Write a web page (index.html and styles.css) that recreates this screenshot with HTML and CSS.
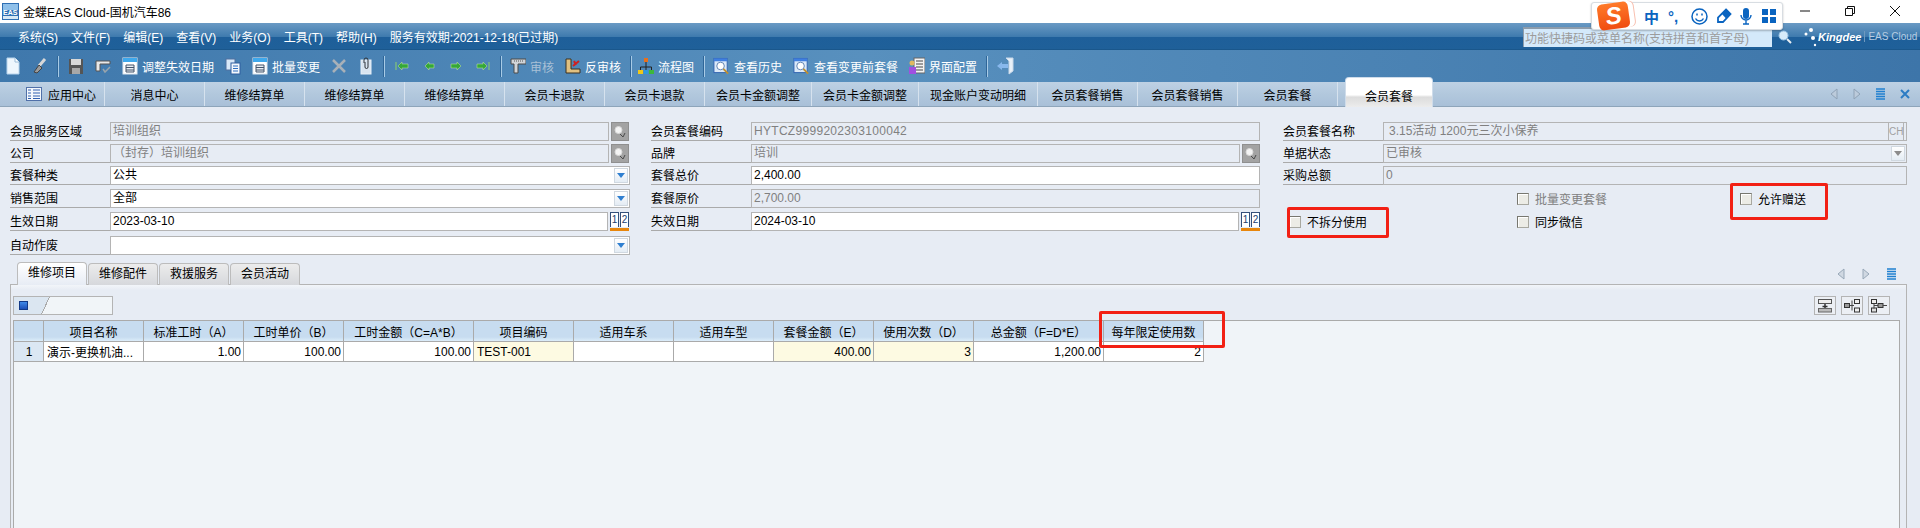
FILE: index.html
```html
<!doctype html>
<html>
    <head>
        <title>金蝶EAS Cloud-国机汽车86</title>
        <link rel="stylesheet" href="styles.css">
    </head>
    <body>
        <svg class="defs" width="0" height="0">
            <symbol id="i-sheet" viewBox="0 0 16 18">
                <rect x="1" y="1" width="14" height="16" fill="#fff" stroke="#dfe8f0"/>
                <rect x="1" y="1" width="14" height="4" fill="#3fa8ec"/>
                <path d="M4 8h8v7H4zM4 10.500h8M4 13h8" fill="#e8eef4" stroke="#44546a"/>
            </symbol>
            <symbol id="i-lens" viewBox="0 0 18 18">
                <rect x="1" y="1" width="14" height="15" fill="#dbe9f8" stroke="#2f62b0"/>
                <rect x="1" y="1" width="14" height="3" fill="#3f7fe0"/>
                <circle cx="8" cy="9" r="4" fill="#fff" stroke="#5b7fb0"/>
                <path d="M11 12l5 5" stroke="#c09030" stroke-width="2"/>
            </symbol>
            <symbol id="i-find" viewBox="0 0 18 19">
                <rect width="18" height="19" fill="#8f8f8f"/>
                <rect x="1" y="1" width="16" height="17" fill="#a3a3a3"/>
                <circle cx="7.500" cy="8" r="3.500" fill="#f4f4f4" stroke="#d8d8d8"/>
                <path d="M9 12l3 3 2-4" fill="none" stroke="#4a4a4a"/>
            </symbol>
        </svg>

        <div class="page">
            <div class="titlebar">
                <svg class="app-icon" width="17" height="17" viewBox="0 0 17 17">
                    <rect width="17" height="17" fill="#2f6fb4"/>
                    <rect x="1" y="1" width="15" height="6" fill="#8fc0ea"/>
                    <rect x="1" y="13" width="15" height="3" fill="#d8e8f4"/>
                    <text x="1" y="12" font-size="7" font-weight="700" fill="#fff">EAS</text>
                </svg>
                <span class="app-name">金蝶EAS Cloud-国机汽车86</span>
                <div class="winctl">
                    <svg width="12" height="12" viewBox="0 0 12 12"><path d="M1 6h10" stroke="#111"/></svg>
                    <svg width="12" height="12" viewBox="0 0 12 12"><path d="M1.500 3.500h7v7h-7zM3.500 3.500v-2h7v7h-2" fill="none" stroke="#111"/></svg>
                    <svg width="12" height="12" viewBox="0 0 12 12"><path d="M1 1l10 10M11 1L1 11" stroke="#111"/></svg>
                </div>
            </div>

            <div class="menubar">
                <span>系统(S)</span>
                <span>文件(F)</span>
                <span>编辑(E)</span>
                <span>查看(V)</span>
                <span>业务(O)</span>
                <span>工具(T)</span>
                <span>帮助(H)</span>
                <span>服务有效期:2021-12-18(已过期)</span>
                <div class="quick">功能快捷码或菜单名称(支持拼音和首字母)</div>
                <svg class="quick-go" width="14" height="14" viewBox="0 0 14 14">
                    <circle cx="5.500" cy="5.500" r="4.500" fill="#d8ecfa" stroke="#9cc4e4"/>
                    <path d="M9 9l4 4" stroke="#e8eef4" stroke-width="2"/>
                </svg>
                <div class="brand">
                    <svg width="13" height="20" viewBox="0 0 13 20">
                        <circle cx="7" cy="3" r="2" fill="#fff"/>
                        <circle cx="2" cy="7" r="1.500" fill="#fff"/>
                        <circle cx="9" cy="11" r="2" fill="#fff"/>
                        <circle cx="11" cy="18" r="1.200" fill="#fff"/>
                    </svg>
                    <b>Kingdee</b>
                    <span>EAS Cloud</span>
                </div>
            </div>

            <div class="toolbar">
                <div class="tool"><svg width="16" height="18" viewBox="0 0 16 18"><path d="M2 1h8l4 4v12H2z" fill="#eef6fd" stroke="#b8d4ec"/><path d="M10 1v4h4" fill="#fff" stroke="#9cbcd8"/></svg></div>
                <div class="tool"><svg width="16" height="18" viewBox="0 0 16 18"><path d="M13 2L7 9" stroke="#d8d8d8" stroke-width="3"/><path d="M7 8l3 3-5 5-3-1z" fill="#9a9a9a" stroke="#444"/></svg></div>
                <i class="sep"></i>
                <div class="tool"><svg width="16" height="18" viewBox="0 0 16 18"><path d="M1 2h14v15H1z" fill="#555"/><rect x="3" y="2" width="10" height="6" fill="#d8d8d8"/><rect x="4" y="11" width="8" height="6" fill="#a8a8a8"/></svg></div>
                <div class="tool"><svg width="16" height="18" viewBox="0 0 16 18"><path d="M1 4h14v3H5v7H1z" fill="#e8e8e8" stroke="#555"/><path d="M8 12l2 3 5-5" fill="none" stroke="#98a4ac" stroke-width="1.500"/></svg></div>
                <div class="tool"><svg width="16" height="18"><use href="#i-sheet"/></svg>调整失效日期</div>
                <div class="tool"><svg width="16" height="18" viewBox="0 0 16 18"><rect x="1" y="2" width="9" height="11" fill="#d8e8f8" stroke="#5070a0"/><rect x="6" y="6" width="9" height="11" fill="#f4f8fc" stroke="#2f5f9f"/><path d="M8 9h5M8 11.500h5M8 14h5" stroke="#2f6fc0"/></svg></div>
                <div class="tool"><svg width="16" height="18"><use href="#i-sheet"/></svg>批量变更</div>
                <div class="tool"><svg width="16" height="18" viewBox="0 0 16 18"><path d="M2 3l12 12M14 3L2 15" stroke="#a8b0b8" stroke-width="2.500"/></svg></div>
                <div class="tool"><svg width="16" height="18" viewBox="0 0 16 18"><rect x="3" y="3" width="10" height="14" fill="#d8e4f0" stroke="#e8f0f8"/><path d="M6 6V3a2 2 0 0 1 4 0v7a1.500 1.500 0 0 1-3 0V5" fill="none" stroke="#30343a"/></svg></div>
                <i class="sep"></i>
                <div class="tool"><svg width="16" height="18" viewBox="0 0 16 18"><path d="M2 5v8" stroke="#8ed06c"/><path d="M4 9l4-4v2h6v4H8v2z" fill="#35a838" stroke="#c8e8a0" stroke-width="0.500"/></svg></div>
                <div class="tool"><svg width="16" height="18" viewBox="0 0 16 18"><path d="M4 9l4-4v2h5v4H8v2z" fill="#35a838" stroke="#c8e8a0" stroke-width="0.500"/></svg></div>
                <div class="tool"><svg width="16" height="18" viewBox="0 0 16 18"><path d="M13 9L9 5v2H3v4h6v2z" fill="#35a838" stroke="#c8e8a0" stroke-width="0.500"/></svg></div>
                <div class="tool"><svg width="16" height="18" viewBox="0 0 16 18"><path d="M12 9L8 5v2H2v4h6v2z" fill="#35a838" stroke="#c8e8a0" stroke-width="0.500"/><path d="M14 5v8" stroke="#8ed06c"/></svg></div>
                <i class="sep narrow"></i>
                <div class="tool off"><svg width="16" height="18" viewBox="0 0 16 18"><path d="M1 2h15v5H8v9H4V7H1z" fill="#d0d4d8" stroke="#4a4a4a"/><path d="M4 4h10" stroke="#555" stroke-dasharray="1 1"/></svg>审核</div>
                <div class="tool"><svg width="16" height="18" viewBox="0 0 16 18"><path d="M1 2h5v10h9v4H1z" fill="#e0c080" stroke="#3a3020"/><path d="M8 9l6-5M9 4l2 4" stroke="#d02020" stroke-width="2"/></svg>反审核</div>
                <i class="sep"></i>
                <div class="tool flow"><svg width="16" height="18" viewBox="0 0 16 18"><path d="M8 5v5M2.500 13v-3h11v3M8 10v3" fill="none" stroke="#222"/><rect x="6" y="1" width="4" height="4" fill="#e8701c"/><rect x="0" y="13" width="5" height="4" fill="#f0c818"/><rect x="6" y="13" width="4" height="4" fill="#2c9ae0"/><rect x="11" y="13" width="5" height="4" fill="#3cb83c"/></svg>流程图</div>
                <i class="sep narrow"></i>
                <div class="tool"><svg width="17" height="18"><use href="#i-lens"/></svg>查看历史</div>
                <div class="tool"><svg width="17" height="18"><use href="#i-lens"/></svg>查看变更前套餐</div>
                <div class="tool cfg"><svg width="17" height="18" viewBox="0 0 17 18"><rect x="6" y="1" width="11" height="15" fill="#f4f4f4" stroke="#666"/><path d="M8 4h7M8 7h7M8 10h7M8 13h7" stroke="#444"/><circle cx="4" cy="6" r="2.500" fill="#e0b860"/><rect x="1" y="10" width="7" height="7" fill="#a050e0"/></svg>界面配置</div>
                <i class="sep narrow"></i>
                <div class="tool"><svg width="18" height="18" viewBox="0 0 18 18"><path d="M10 1h7v13l-4 3V4z" fill="#e8f0f8" stroke="#c8d8e8"/><path d="M1 9l5-4v2h6v4H6v2z" fill="#88b8ec"/></svg></div>
            </div>

            <div class="tabbar">
                <div class="tab first">
                    <svg width="16" height="14" viewBox="0 0 16 14"><rect x="0.500" y="0.500" width="15" height="13" fill="#f4f8fc" stroke="#5070a8"/><path d="M2 3h3M2 6h3M2 9h3M2 11.500h3M7 3h7M7 6h7M7 9h7M7 11.500h7" stroke="#3060b0"/></svg>
                    应用中心
                </div>
                <div class="tab">消息中心</div>
                <div class="tab">维修结算单</div>
                <div class="tab">维修结算单</div>
                <div class="tab">维修结算单</div>
                <div class="tab">会员卡退款</div>
                <div class="tab">会员卡退款</div>
                <div class="tab wide">会员卡金额调整</div>
                <div class="tab wide">会员卡金额调整</div>
                <div class="tab wider">现金账户变动明细</div>
                <div class="tab">会员套餐销售</div>
                <div class="tab">会员套餐销售</div>
                <div class="tab">会员套餐</div>
                <div class="tab active">会员套餐</div>
                <div class="tab-tools">
                    <svg width="8" height="12" viewBox="0 0 8 12"><path d="M7 1L1 6l6 5z" fill="#bccbdb" stroke="#8fa2b6"/></svg>
                    <svg width="8" height="12" viewBox="0 0 8 12"><path d="M1 1l6 5-6 5z" fill="#bccbdb" stroke="#8fa2b6"/></svg>
                    <svg width="9" height="12" viewBox="0 0 9 12"><path d="M0 1h9M0 3.500h9M0 6h9M0 8.500h9M0 11h9" stroke="#2080d0" stroke-width="1.300"/></svg>
                    <svg width="10" height="12" viewBox="0 0 10 12"><path d="M1 2l8 8M9 2l-8 8" stroke="#2c7cc4" stroke-width="2"/></svg>
                </div>
            </div>

            <div class="content">
                <div class="form">
                    <div class="field col-a">
                        <label>会员服务区域</label>
                        <div class="box off">培训组织</div>
                        <svg class="side" width="18" height="19"><use href="#i-find"/></svg>
                    </div>
                    <div class="field col-b">
                        <label>会员套餐编码</label>
                        <div class="box off code">HYTCZ9999202303100042</div>
                    </div>
                    <div class="field col-c">
                        <label>会员套餐名称</label>
                        <div class="box off pad">3.15活动 1200元三次小保养<span class="lang">CH</span></div>
                    </div>

                    <div class="field col-a">
                        <label>公司</label>
                        <div class="box off">（封存）培训组织</div>
                        <svg class="side" width="18" height="19"><use href="#i-find"/></svg>
                    </div>
                    <div class="field col-b">
                        <label>品牌</label>
                        <div class="box off">培训</div>
                        <svg class="side" width="18" height="19"><use href="#i-find"/></svg>
                    </div>
                    <div class="field col-c">
                        <label>单据状态</label>
                        <div class="box off">已审核<span class="combo grey"></span></div>
                    </div>

                    <div class="field col-a">
                        <label>套餐种类</label>
                        <div class="box">公共<span class="combo"></span></div>
                    </div>
                    <div class="field col-b">
                        <label>套餐总价</label>
                        <div class="box">2,400.00</div>
                    </div>
                    <div class="field col-c">
                        <label>采购总额</label>
                        <div class="box off">0</div>
                    </div>

                    <div class="field col-a">
                        <label>销售范围</label>
                        <div class="box">全部<span class="combo"></span></div>
                    </div>
                    <div class="field col-b">
                        <label>套餐原价</label>
                        <div class="box off">2,700.00</div>
                    </div>
                    <div class="checks">
                        <span></span>
                        <div class="check off"><i></i>批量变更套餐</div>
                        <div class="check"><i></i>允许赠送</div>
                        <div class="check"><i></i>不拆分使用</div>
                        <div class="check"><i></i>同步微信</div>
                    </div>

                    <div class="field col-a">
                        <label>生效日期</label>
                        <div class="box">2023-03-10</div>
                        <div class="cal"><span>1</span><span>2</span></div>
                    </div>
                    <div class="field col-b">
                        <label>失效日期</label>
                        <div class="box">2024-03-10</div>
                        <div class="cal"><span>1</span><span>2</span></div>
                    </div>

                    <div class="field col-a last">
                        <label>自动作废</label>
                        <div class="box"><span class="combo"></span></div>
                    </div>
                </div>

                <div class="subtabs">
                    <div class="subtab active">维修项目</div>
                    <div class="subtab">维修配件</div>
                    <div class="subtab">救援服务</div>
                    <div class="subtab">会员活动</div>
                    <div class="sub-tools">
                        <svg width="8" height="12" viewBox="0 0 8 12"><path d="M7 1L1 6l6 5z" fill="#d0d8e2" stroke="#98a8b8"/></svg>
                        <svg width="8" height="12" viewBox="0 0 8 12"><path d="M1 1l6 5-6 5z" fill="#d0d8e2" stroke="#98a8b8"/></svg>
                        <svg width="9" height="12" viewBox="0 0 9 12"><path d="M0 1h9M0 3.500h9M0 6h9M0 8.500h9M0 11h9" stroke="#2080d0" stroke-width="1.300"/></svg>
                    </div>
                </div>

                <div class="panel">
                    <div class="strip">
                        <div class="sheet-tab"><i></i></div>
                        <div class="tree-btns">
                            <button><svg width="16" height="14" viewBox="0 0 16 14"><rect x="1.500" y="0.500" width="13" height="4" fill="#eee" stroke="#555"/><rect x="1.500" y="9.500" width="13" height="3.500" fill="#bbb" stroke="#666"/><path d="M8 5v4M5.500 7.500h5" stroke="#333" stroke-width="1.500"/></svg></button>
                            <button><svg width="16" height="14" viewBox="0 0 16 14"><rect x="0.500" y="4.500" width="5" height="4" fill="#999" stroke="#333"/><path d="M6 6.500h4M8 1.500v10" stroke="#444"/><rect x="10.500" y="0.500" width="5" height="4" fill="#eee" stroke="#333"/><rect x="10.500" y="9" width="5" height="4" fill="#eee" stroke="#333"/></svg></button>
                            <button><svg width="16" height="14" viewBox="0 0 16 14"><rect x="0.500" y="0.500" width="5" height="4" fill="#eee" stroke="#333"/><rect x="0.500" y="9" width="5" height="4" fill="#ddd" stroke="#333"/><path d="M3 4.500v5M3 6.500h4" stroke="#444"/><rect x="7" y="4.500" width="5" height="4" fill="#999" stroke="#333"/><path d="M12 6.500h4" stroke="#444"/></svg></button>
                        </div>
                    </div>
                    <div class="table-box">
                        <table class="grid">
                            <colgroup>
                                <col class="c-no"><col class="c-100"><col class="c-100"><col class="c-100"><col class="c-130"><col class="c-100"><col class="c-100"><col class="c-100"><col class="c-100"><col class="c-100"><col class="c-130"><col class="c-100">
                            </colgroup>
                            <thead>
                                <tr>
                                    <th></th>
                                    <th>项目名称</th>
                                    <th>标准工时（A）</th>
                                    <th>工时单价（B）</th>
                                    <th>工时金额（C=A*B）</th>
                                    <th>项目编码</th>
                                    <th>适用车系</th>
                                    <th>适用车型</th>
                                    <th>套餐金额（E）</th>
                                    <th>使用次数（D）</th>
                                    <th>总金额（F=D*E）</th>
                                    <th>每年限定使用数</th>
                                </tr>
                            </thead>
                            <tbody>
                                <tr>
                                    <td class="no">1</td>
                                    <td>演示-更换机油...</td>
                                    <td class="num">1.00</td>
                                    <td class="num">100.00</td>
                                    <td class="num">100.00</td>
                                    <td class="must">TEST-001</td>
                                    <td></td>
                                    <td></td>
                                    <td class="num must">400.00</td>
                                    <td class="num must">3</td>
                                    <td class="num">1,200.00</td>
                                    <td class="num">2</td>
                                </tr>
                            </tbody>
                        </table>
                    </div>
                </div>
            </div>

            <!-- red notes drawn over the shot -->
            <div class="note note-gift"></div>
            <div class="note note-split"></div>
            <div class="note note-limit"></div>

            <div class="ime">
                <div class="ime-logo"><span>S</span></div>
                <b class="ime-zh">中</b>
                <span class="ime-punct">°,</span>
                <svg width="17" height="17" viewBox="0 0 17 17"><circle cx="8.500" cy="8.500" r="7.500" fill="none" stroke="#0a64c0" stroke-width="1.500"/><path d="M6 5.500v2M11 5.500v2" stroke="#0a64c0" stroke-width="1.500"/><path d="M4.500 10.500a4.500 4.500 0 0 0 8 0" fill="none" stroke="#0a64c0" stroke-width="1.500"/></svg>
                <svg width="16" height="16" viewBox="0 0 16 16"><path d="M10 1.500l4.500 4.500L7 14H2v-4.500z" fill="none" stroke="#0a64c0" stroke-width="1.800"/><path d="M10 1.500l4.500 4.500L10 10.500 6 6z" fill="#0a64c0"/></svg>
                <svg width="12" height="17" viewBox="0 0 12 17"><rect x="3" y="0" width="6" height="11" rx="3" fill="#0a64c0"/><path d="M1 7a5 5 0 0 0 10 0M6 12v4M3 16h6" fill="none" stroke="#0a64c0" stroke-width="1.400"/></svg>
                <svg width="14" height="14" viewBox="0 0 14 14"><path d="M0 0h6v6H0zM8 0h6v6H8zM0 8h6v6H0zM8 8h6v6H8z" fill="#0a64c0"/></svg>
            </div>
        </div>
    </body>
</html>
```

FILE: styles.css
```css
* {
    box-sizing: border-box;
}
html,
body {
    margin: 0;
    height: 528px;
    overflow: hidden;
}
body {
    font-family: "Liberation Sans", "Noto Sans CJK SC", sans-serif;
    font-size: 12px;
    color: #000;
    background: #e7ecf4;
}
.defs {
    position: absolute;
}
.page {
    position: relative;
    display: flex;
    flex-direction: column;
    height: 528px;
}

/* window title */
.titlebar {
    display: flex;
    align-items: center;
    height: 23px;
    padding-left: 2px;
    background: #fff;
    flex: none;
}
.app-icon {
    margin-right: 4px;
}
.app-name {
    font-size: 12px;
}
.winctl {
    display: flex;
    gap: 33px;
    margin-left: auto;
    padding: 0 19px 2px 0;
}

/* menu */
.menubar {
    display: flex;
    align-items: center;
    gap: 13px;
    height: 27px;
    padding-left: 18px;
    color: #fff;
    background: linear-gradient(#6a9ac4, #3f7bae 50%, #1e5f9a 52%, #1f6099 96%, #154f80);
    flex: none;
}
.quick {
    width: 249px;
    height: 20px;
    margin-left: auto;
    padding: 2px 1px;
    line-height: 16px;
    color: #9c9c9c;
    background: #d4e9fa;
    border-top: 2px solid #8d9cab;
    border-left: 1px solid #8d9cab;
    white-space: nowrap;
    overflow: hidden;
}
.quick-go {
    margin-left: -7px;
    flex: none;
}
.brand {
    display: flex;
    align-items: center;
    width: 116px;
    margin-left: -1px;
    flex: none;
}
.brand svg {
    flex: none;
}
.brand b {
    margin-left: 1px;
    font-size: 11px;
    font-style: italic;
}
.brand span {
    margin-left: 3px;
    padding-left: 3px;
    font-size: 10px;
    color: #b8cde2;
    border-left: 1px solid #6f9abf;
    white-space: nowrap;
}

/* toolbar */
.toolbar {
    display: flex;
    align-items: center;
    gap: 11px;
    height: 32px;
    padding-left: 5px;
    color: #fff;
    background: linear-gradient(90deg, #3f78ac, #5890be 45%, #3d75a9);
    flex: none;
}
.tool {
    display: flex;
    align-items: center;
    gap: 4px;
    white-space: nowrap;
}
.tool.off {
    color: #a9c0d6;
}
.tool.flow {
    margin-left: -3px;
}
.tool.cfg {
    margin-left: -1px;
}
.sep {
    width: 1px;
    height: 21px;
    margin: 0 -2px 0 -1px;
    background: #a8cbe6;
    box-shadow: -1px 0 0 #2f6698;
}
.sep.narrow {
    margin-right: -3px;
}

/* open pages */
.tabbar {
    display: flex;
    height: 25px;
    background: linear-gradient(#bed1e4, #b2c8dd 50%, #a9c0d8);
    border-bottom: 1px solid #8ea5ba;
    flex: none;
}
.tab {
    display: flex;
    align-items: center;
    justify-content: center;
    gap: 6px;
    width: 100px;
    height: 24px;
    border-right: 1px solid #d6e2ee;
    white-space: nowrap;
}
.tab.first {
    width: 105px;
    padding-left: 18px;
}
.tab.wide {
    width: 107px;
}
.tab.wider {
    width: 119px;
}
.tab.active {
    width: 88px;
    height: 30px;
    margin: -5px 0 0 7px;
    padding-top: 5px;
    background: linear-gradient(#fff, #fff 58%, #dcdcdc 66%, #ececec);
    border: 1px solid #cfdcea;
    border-bottom: none;
    border-radius: 4px 4px 0 0;
}
.tab-tools {
    display: flex;
    align-items: center;
    gap: 15px;
    margin-left: auto;
    padding-right: 10px;
}

/* header form */
.content {
    display: flex;
    flex-direction: column;
    flex: 1;
    min-height: 0;
}
.form {
    display: grid;
    grid-template-columns: 641px 632px 637px;
    grid-template-rows: 22px 22px 23px 23px 24px 19px;
    height: 133px;
    margin-top: 15px;
    padding-left: 10px;
    flex: none;
}
.field {
    display: flex;
    height: 19px;
}
.col-a {
    width: 620px;
    grid-column: 1;
}
.col-b {
    width: 609px;
    grid-column: 2;
}
.col-c {
    width: 624px;
    grid-column: 3;
}
.field label {
    width: 100px;
    padding-top: 3px;
    line-height: 15px;
    border-bottom: 1px solid #aaa;
    flex: none;
}
.box {
    position: relative;
    flex: 1;
    min-width: 0;
    height: 19px;
    padding-left: 2px;
    line-height: 17px;
    background: #fff;
    border: 1px solid #b4b4b4;
    white-space: nowrap;
}
.box.off {
    color: #808080;
    background: transparent;
}
.box.pad {
    padding-left: 5px;
}
.box.code {
    letter-spacing: 0.300px;
}
.side {
    margin-left: 2px;
    flex: none;
}
.col-a .side {
    margin-right: 1px;
}
.cal {
    display: flex;
    gap: 1px;
    width: 19px;
    height: 19px;
    margin-left: 2px;
    font-size: 10px;
    line-height: 13px;
    text-align: center;
    color: #23406e;
    border-bottom: 3px solid #e8860c;
    flex: none;
}
.cal span {
    width: 9px;
    height: 15px;
    background: #fff;
    border: 1px solid #35507a;
    border-bottom: none;
}
.col-a .cal {
    margin-right: 1px;
}
.col-a.last {
    grid-column: 1;
}
.combo {
    position: absolute;
    top: 1px;
    right: 1px;
    width: 14px;
    height: 15px;
    background: linear-gradient(#fff, #e4ecf4);
    border: 1px solid #d0d8e0;
}
.combo::after {
    content: "";
    position: absolute;
    top: 4px;
    left: 2px;
    border-top: 5px solid #2f7fd0;
    border-left: 4px solid transparent;
    border-right: 4px solid transparent;
}
.combo.grey::after {
    border-top-color: #8c8c8c;
}
.lang {
    position: absolute;
    top: 0;
    right: 2px;
    width: 16px;
    height: 17px;
    text-align: center;
    font-size: 10px;
    color: #a0a0a0;
    border-left: 1px solid #b4b4b4;
    border-right: 1px solid #b4b4b4;
}
.checks {
    display: grid;
    grid-template-columns: 228px 223px auto;
    grid-template-rows: 23px 19px;
    grid-column: 3;
    grid-row: 4 / span 2;
    padding-left: 6px;
}
.check {
    display: flex;
    align-items: center;
    gap: 6px;
    height: 19px;
}
.check i {
    width: 12px;
    height: 12px;
    background: #ecece6;
    border: 1px solid #77776f;
    border-right-color: #a8a8a0;
    border-bottom-color: #a8a8a0;
    box-shadow: inset 1px 1px 0 #fff;
}
.check.off {
    color: #808080;
}

/* detail tabs */
.subtabs {
    position: relative;
    display: flex;
    align-items: flex-end;
    gap: 1px;
    height: 23px;
    margin-top: 7px;
    padding-left: 17px;
    flex: none;
}
.subtab {
    width: 70px;
    height: 22px;
    padding-top: 2px;
    line-height: 17px;
    text-align: center;
    background: linear-gradient(#ececec, #d6d8dc);
    border: 1px solid #bcbcbc;
    border-bottom: none;
    border-radius: 4px 4px 0 0;
}
.subtab.active {
    z-index: 1;
    height: 23px;
    background: linear-gradient(#fff, #e7ecf4);
}
.sub-tools {
    display: flex;
    align-items: center;
    gap: 17px;
    height: 23px;
    margin-left: auto;
    padding-right: 24px;
}
.panel {
    display: flex;
    flex-direction: column;
    flex: 1;
    min-height: 0;
    margin: -1px 13px 0 10px;
    padding: 0 6px 0 2px;
    background: linear-gradient(#f2f5f9, #e7ecf4 5px);
    border: 1px solid #b4b4b4;
    border-bottom: none;
}
.strip {
    display: flex;
    justify-content: space-between;
    height: 19px;
    margin-top: 11px;
    padding-right: 10px;
    flex: none;
}
.sheet-tab {
    position: relative;
    width: 100px;
    height: 19px;
    background: linear-gradient(115deg, #dbe6f1 33%, #aaa 33%, #aaa 34%, #f1f5f8 34%);
    border: 1px solid #b4b4b4;
}
.sheet-tab i {
    position: absolute;
    top: 4px;
    left: 5px;
    width: 9px;
    height: 9px;
    background: linear-gradient(#3f8ae8, #1c4fb8);
    border: 1px solid #123a88;
}
.tree-btns {
    display: flex;
    gap: 5px;
}
.tree-btns button {
    display: flex;
    align-items: center;
    justify-content: center;
    width: 22px;
    height: 19px;
    padding: 0;
    background: #eceff4;
    border: 1px solid #b4b4b4;
}

/* entry table */
.table-box {
    flex: 1;
    min-height: 0;
    margin-top: 5px;
    background: #f0f4f8;
    border: 1px solid #aaa;
    border-bottom: none;
}
.grid {
    width: 1190px;
    table-layout: fixed;
    border-collapse: separate;
    border-spacing: 0;
}
.c-no {
    width: 30px;
}
.c-100 {
    width: 100px;
}
.c-130 {
    width: 130px;
}
.grid th,
.grid td {
    padding: 0 1px;
    border-right: 1px solid #aaa;
    border-bottom: 1px solid #aaa;
    white-space: nowrap;
    overflow: hidden;
}
.grid th {
    height: 21px;
    font-weight: 400;
    text-align: center;
    background: linear-gradient(#c7dcf0, #c7dcf0 80%, #dcedfa);
}
.grid td {
    height: 20px;
    padding: 0 2px 0 3px;
    background: #fff;
}
.grid td.no {
    text-align: center;
    background: #dbe7f3;
}
.grid td.num {
    text-align: right;
}
.grid td.must {
    background: #fdfae2;
}

/* annotations */
.note {
    position: absolute;
    border: 3px solid #f22014;
    border-radius: 2px;
}
.note-gift {
    top: 183px;
    left: 1730px;
    width: 98px;
    height: 37px;
}
.note-split {
    top: 207px;
    left: 1287px;
    width: 102px;
    height: 31px;
}
.note-limit {
    top: 311px;
    left: 1099px;
    width: 126px;
    height: 37px;
}

/* input method bar on top of the window */
.ime {
    position: absolute;
    top: 2px;
    left: 1591px;
    display: flex;
    align-items: center;
    width: 192px;
    height: 28px;
    padding-left: 6px;
    background: #fff;
    border: 1px solid #d8dde2;
    border-radius: 3px;
    box-shadow: 0 1px 2px rgba(0, 0, 0, 0.250);
}
.ime svg {
    flex: none;
}
.ime-logo {
    display: flex;
    align-items: center;
    justify-content: center;
    width: 31px;
    height: 26px;
    margin-right: 15px;
    background: linear-gradient(#ff7a2a, #f04c10);
    border-radius: 5px;
    box-shadow: 5px 0 0 #fff, 6px 0 0 #f8c0b0;
    transform: rotate(-8deg);
}
.ime-logo span {
    font-size: 24px;
    font-weight: 700;
    font-style: italic;
    color: #fff;
}
.ime-zh {
    width: 16px;
    font-size: 15px;
    color: #0a64c0;
}
.ime-punct {
    width: 31px;
    padding-left: 8px;
    font-size: 15px;
    font-weight: 700;
    color: #0a64c0;
}
.ime svg + svg {
    margin-left: 8px;
}
.ime svg:last-child {
    margin-left: 10px;
}
```
